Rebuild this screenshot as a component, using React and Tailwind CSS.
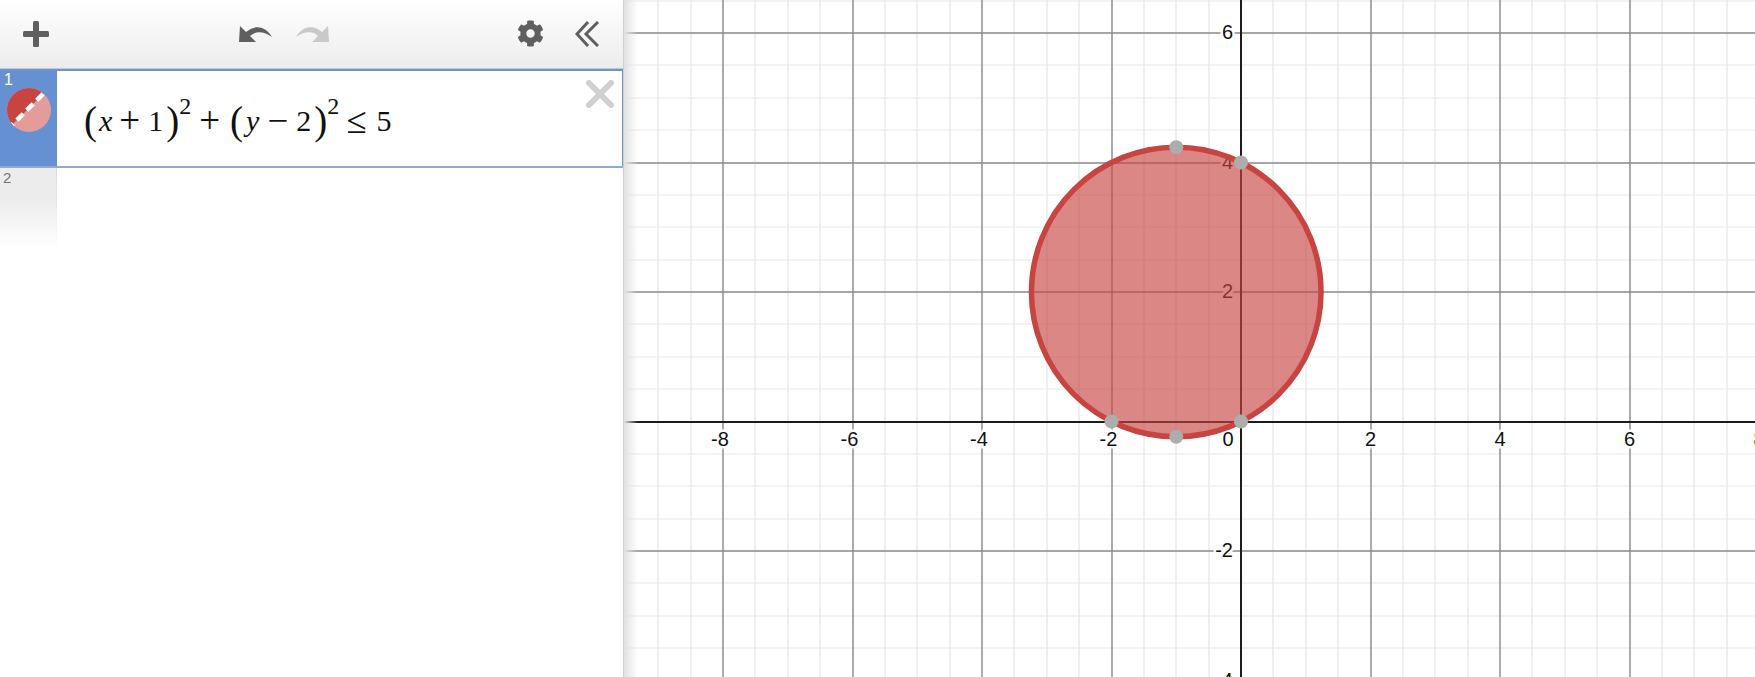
import { FaCog } from 'react-icons/fa';

const OX = 617; // origin inside the graph, graph starts at x=623
const OY = 421.5;
const UNIT = 64.75;
const W = 1132;
const H = 677;

// all the grid lines for one direction, step is in units
const linesFor = (origin, size, step) => {
  const out = [];
  const n = Math.ceil(size / (UNIT * step)) + 1;
  for (let i = -n; i <= n; i++) {
    const p = origin + i * step * UNIT;
    if (p >= 0 && p <= size) out.push({ i, p: Math.round(p) });
  }
  return out;
};

const xLabels = [-8, -6, -4, -2, 2, 4, 6, 8];
const yLabels = [6, 4, 2, -2, -4];
const points = [
  [-1, 4.236],
  [0, 4],
  [-2, 0],
  [0, 0],
  [-1, -0.236],
];

function Graph() {
  const minorX = linesFor(OX, W, 0.5);
  const minorY = linesFor(OY, H, 0.5);
  const majorX = linesFor(OX, W, 2);
  const majorY = linesFor(OY, H, 2);
  const labelStyle = { paintOrder: 'stroke', fontFamily: '"Liberation Sans", Arial, sans-serif' };

  return (
    <div className="relative flex-1 h-full overflow-hidden bg-white">
      <svg width={W} height={H} className="block">
        {minorX.map(l => <line key={l.i} x1={l.p} x2={l.p} y1={0} y2={H} stroke="#e2e2e2" strokeWidth="1.1" />)}
        {minorY.map(l => <line key={l.i} y1={l.p} y2={l.p} x1={0} x2={W} stroke="#e8e8e8" strokeWidth="1.2" />)}
        {majorX.map(l => <line key={l.i} x1={l.p} x2={l.p} y1={0} y2={H} stroke="#7c7c7c" strokeWidth="1.2" />)}
        {majorY.map(l => <line key={l.i} y1={l.p} y2={l.p} x1={0} x2={W} stroke="#8c8c8c" strokeWidth="1.3" />)}
        <line x1={0} x2={W} y1={OY + 0.5} y2={OY + 0.5} stroke="#1c1c1c" strokeWidth="2" />
        <line x1={OX} x2={OX} y1={0} y2={H} stroke="#1c1c1c" strokeWidth="2" />

        {xLabels.map(v => (
          <text key={v} x={OX + v * UNIT - (v < 0 ? 3 : 0)} y={446} textAnchor="middle" fontSize="20" fill="#111" stroke="#fff" strokeWidth="5" style={labelStyle}>{v}</text>
        ))}
        <text x={OX - 13} y={446} textAnchor="middle" fontSize="20" fill="#111" stroke="#fff" strokeWidth="5" style={labelStyle}>0</text>
        {yLabels.map(v => (
          <text key={v} x={OX - 8} y={OY - v * UNIT + 6} textAnchor="end" fontSize="20" fill="#111" stroke="#fff" strokeWidth="5" style={labelStyle}>{v}</text>
        ))}

        <circle cx={OX - UNIT} cy={OY - 2 * UNIT} r={Math.sqrt(5) * UNIT} fill="#c74440" fillOpacity="0.64" stroke="#c74440" strokeWidth="5.5" />
        {points.map(([x, y]) => (
          <circle key={`${x},${y}`} cx={OX + x * UNIT} cy={OY - y * UNIT} r="7" fill="#adadad" />
        ))}
      </svg>
      <div className="absolute left-0 top-0 h-full w-[14px] bg-gradient-to-r from-[#e2e2e2] to-transparent" />
    </div>
  );
}

function Toolbar() {
  return (
    <div className="flex h-[69px] items-center bg-gradient-to-b from-white to-[#ececec] pb-[2px] text-[#5f5f5f]">
      <svg width="26" height="26" viewBox="0 0 26 26" className="ml-[23px]" fill="currentColor">
        <rect x="10" y="0" width="6" height="26" rx="1.5" />
        <rect x="0" y="10" width="26" height="6" rx="1.5" />
      </svg>
      <svg width="33" height="20" viewBox="0 0 33 20" className="ml-[190px]" fill="currentColor">
        <path d="M0 18 L1 2 L7 8 C14 2 25 0 33 13 C26 8 17 6 11 12 L17 18 Z" />
      </svg>
      <svg width="33" height="20" viewBox="0 0 33 20" className="ml-[24px] -scale-x-100 text-[#c9c9c9]" fill="currentColor">
        <path d="M0 18 L1 2 L7 8 C14 2 25 0 33 13 C26 8 17 6 11 12 L17 18 Z" />
      </svg>
      <FaCog className="ml-[188px] h-[27px] w-[27px]" />
      <svg width="24" height="26" viewBox="0 0 24 26" className="ml-[31px]" fill="none" stroke="currentColor" strokeWidth="3">
        <path d="M13 1 L2 13 L13 25" />
        <path d="M23 1 L11 13 L23 25" />
      </svg>
    </div>
  );
}

function Formula() {
  const paren = 'text-[39px] leading-none';
  const sup = 'relative -top-[15px] text-[24px] leading-none';
  const op = 'text-[37px] leading-none';
  return (
    <div className="flex items-center pl-[27px] pt-[4px] text-[30px] text-[#111] whitespace-nowrap" style={{ fontFamily: '"Liberation Serif", "Times New Roman", serif' }}>
      <span className={paren}>(</span>
      <i className="ml-[2px]">x</i>
      <span className={`${op} ml-[7px]`}>+</span>
      <span className="ml-[8px]">1</span>
      <span className={`${paren} ml-[3px]`}>)</span>
      <span className={sup}>2</span>
      <span className={`${op} ml-[8px]`}>+</span>
      <span className={`${paren} ml-[10px]`}>(</span>
      <i className="ml-[3px]">y</i>
      <span className={`${op} ml-[8px]`}>−</span>
      <span className="ml-[8px]">2</span>
      <span className={`${paren} ml-[3px]`}>)</span>
      <span className={sup}>2</span>
      <span className={`${op} ml-[7px]`}>≤</span>
      <span className="ml-[10px]">5</span>
    </div>
  );
}

function ColorSwatch() {
  return (
    <svg width="44" height="44" viewBox="0 0 44 44" className="mx-auto">
      <defs>
        <clipPath id="swatch"><circle cx="22" cy="22" r="22" /></clipPath>
      </defs>
      <g clipPath="url(#swatch)">
        <rect width="44" height="44" fill="#e29d9b" />
        <path d="M0 0 H44 L0 44 Z" fill="#c74440" transform="translate(-1 -1)" />
        <line x1="0" y1="42" x2="42" y2="0" stroke="#fff" strokeWidth="4.5" strokeDasharray="9 5" />
      </g>
    </svg>
  );
}

export default function App() {
  return (
    <div className="flex h-[677px] w-[1755px] overflow-hidden bg-white" style={{ fontFamily: '"Liberation Sans", Arial, sans-serif' }}>
      <div className="h-full w-[624px] shrink-0 border-r border-[#cfcfcf]">
        <Toolbar />
        {/* expression 1 */}
        <div className="flex h-[99px] border-y-2 border-t-[#6a94d4] border-b-[#8da9d4] [box-shadow:0_-1px_0_#c8c8c8]">
          <div className="w-[57px] shrink-0 bg-[#6590d2] text-white">
            <div className="pl-[4px] pt-[1px] text-[16px] leading-[16px]">1</div>
            <ColorSwatch />
          </div>
          <div className="relative flex flex-1 items-center border-r border-[#6a94d4] bg-white">
            <Formula />
            <svg width="28" height="28" viewBox="0 0 28 28" className="absolute right-[8px] top-[9px]" stroke="#d0d0d0" strokeWidth="6" strokeLinecap="round">
              <path d="M3 3 L25 25 M25 3 L3 25" />
            </svg>
          </div>
        </div>
        {/* expression 2 */}
        <div className="flex h-[80px] w-[57px]">
          <div className="flex-1 bg-gradient-to-b from-[#ececec] from-40% to-white pl-[3px] pt-[1px] text-[15px] leading-[17px] text-[#777]">2</div>
          <div className="w-px bg-gradient-to-b from-[#d8d8d8] to-white" />
        </div>
      </div>
      <Graph />
    </div>
  );
}
